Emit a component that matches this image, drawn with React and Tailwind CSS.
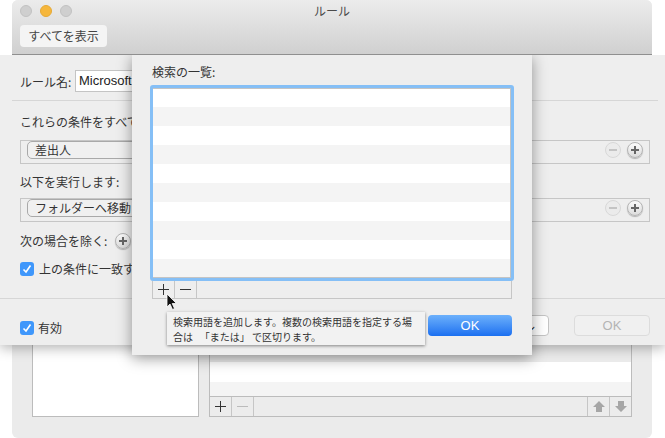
import React from 'react';

const jp = { fontFamily: '"Noto Sans CJK JP", "Liberation Sans", sans-serif' };
const latin = { fontFamily: '"Liberation Sans", sans-serif' };

const RoundButton = ({ minus, disabled }) => (
  <span className={`flex items-center justify-center w-[16px] h-[16px] rounded-full border ${disabled ? 'border-[#d8d8d8] bg-[#ebebeb]' : 'border-[#b4b4b4] bg-gradient-to-b from-[#fbfbfb] to-[#dcdcdc] shadow-[0_1px_1px_rgba(0,0,0,0.25)]'}`}>
    <svg width="10" height="10" viewBox="0 0 10 10">
      <rect x="1" y="4" width="8" height="2" fill={disabled ? '#c4c4c4' : '#666'} />
      {!minus && <rect x="4" y="1" width="2" height="8" fill="#666" />}
    </svg>
  </span>
);

const CheckBox = ({ className = '' }) => (
  <span className={`flex items-center justify-center w-[14px] h-[14px] rounded-[3px] bg-[#3f97fb] ${className}`}>
    <svg width="10" height="10" viewBox="0 0 10 10" fill="none">
      <path d="M1.5 5.5 L4 8 L8.5 1.5" stroke="#fff" strokeWidth="1.6" />
    </svg>
  </span>
);

const Pill = ({ children }) => (
  <span className="flex items-center h-[18px] w-[120px] pl-[7px] rounded-[5px] border border-[#a9a9a9] bg-[#f0f0f0] text-[12px] text-[#333] shrink-0">
    {children}
  </span>
);

const RuleBox = ({ label }) => (
  <div className="flex items-center justify-between h-[24px] ml-[20px] mr-[15px] pl-[6px] pr-[6px] pb-[4px] border border-[#c6c6c6]">
    <Pill>{label}</Pill>
    <div className="flex gap-[6px]">
      <RoundButton minus disabled />
      <RoundButton />
    </div>
  </div>
);

const Arrow = ({ down }) => (
  <svg width="14" height="13" viewBox="0 0 14 13" className={down ? 'rotate-180' : ''}>
    <path d="M7 1 L13 7 L10 7 L10 12 L4 12 L4 7 L1 7 Z" fill="#a6a6a6" />
  </svg>
);

const PlusIcon = ({ color = '#333' }) => (
  <svg width="13" height="13" viewBox="0 0 13 13">
    <rect x="1" y="6" width="11" height="1" fill={color} />
    <rect x="6" y="1" width="1" height="11" fill={color} />
  </svg>
);

const MinusIcon = ({ color = '#333' }) => (
  <svg width="13" height="13" viewBox="0 0 13 13">
    <rect x="1" y="6" width="11" height="1" fill={color} />
  </svg>
);

const Cursor = () => (
  <svg width="12" height="18" viewBox="0 0 12 18" className="absolute left-[166px] top-[293px]">
    <path d="M1 1 L1 14 L4 11 L6.5 16.5 L8.5 15.5 L6.2 10.5 L10.5 10.5 Z" fill="#111" stroke="#fff" strokeWidth="0.8" />
  </svg>
);

const App = () => {
  const rows = Array.from({ length: 10 });

  return (
    <div className="relative w-[665px] h-[438px] overflow-hidden bg-white" style={jp}>
      {/* back window */}
      <div className="absolute left-[12px] top-0 w-[640px] h-[438px] flex flex-col bg-[#ebebeb] rounded-[6px]">
        <div className="relative h-[55px] shrink-0 rounded-t-[6px] border-b border-[#8f8f8f] bg-gradient-to-b from-[#ececec] to-[#d0d0d0]">
          <div className="flex gap-[8px] pl-[8px] pt-[5px]">
            <span className="w-[12px] h-[12px] rounded-full bg-[#cfcfcf] border border-[#c2c2c2]" />
            <span className="w-[12px] h-[12px] rounded-full bg-[#f6b73c] border border-[#e6a935]" />
            <span className="w-[12px] h-[12px] rounded-full bg-[#cfcfcf] border border-[#c2c2c2]" />
          </div>
          <p className="absolute top-[3px] left-0 w-full text-center text-[12px] leading-[16px] text-[#4a4a4a]">ルール</p>
          <button className="block ml-[8px] mt-[8px] w-[87px] h-[22px] rounded-[4px] bg-[#f4f4f4] text-[12px] text-[#444]">すべてを表示</button>
        </div>
        <div className="flex-1 flex items-end gap-[10px] px-[20px] pb-[21px]">
          <div className="w-[167px] h-full bg-white border border-[#bcbcbc]" />
          <div className="flex-1 flex flex-col h-full border border-[#bcbcbc]">
            <div className="flex-1 flex flex-col justify-end">
              <div className="h-[20px] bg-white" />
              <div className="h-[14px] bg-[#f4f4f4]" />
            </div>
            <div className="flex items-center h-[20px] border-t border-[#bcbcbc] bg-[#ececec]">
              <span className="flex items-center justify-center w-[22px] h-full border-r border-[#c6c6c6]"><PlusIcon /></span>
              <span className="flex items-center justify-center w-[22px] h-full border-r border-[#c6c6c6]"><MinusIcon color="#bbb" /></span>
              <span className="flex-1" />
              <span className="flex items-center justify-center w-[22px] h-full border-l border-[#c6c6c6]"><Arrow /></span>
              <span className="flex items-center justify-center w-[22px] h-full border-l border-[#c6c6c6]"><Arrow down /></span>
            </div>
          </div>
        </div>
      </div>

      {/* rule sheet */}
      <div className="absolute left-0 top-[55px] w-[665px] h-[290px] flex flex-col bg-[#eeeeee] shadow-[0_3px_12px_rgba(0,0,0,0.3)] [clip-path:inset(0_-20px_-20px_-20px)] text-[12px] text-[#333]">
        <div className="flex items-center h-[22px] mt-[15px] ml-[20px]">
          <span className="w-[55px] pt-[2px] whitespace-nowrap">ルール名:</span>
          <span className="flex items-center h-[22px] w-[200px] pl-[3px] bg-white border border-[#c4c4c4] text-[13px] text-[#222]" style={latin}>Microsoft</span>
        </div>
        <div className="h-px mt-[8px] ml-[12px] mr-[7px] bg-[#d6d6d6]" />
        <p className="ml-[20px] mt-[13px] leading-[16px]">これらの条件をすべて満たす場合:</p>
        <div className="mt-[10px]"><RuleBox label="差出人" /></div>
        <p className="ml-[20px] mt-[10px] leading-[16px]">以下を実行します:</p>
        <div className="mt-[8px]"><RuleBox label="フォルダーへ移動" /></div>
        <div className="flex items-center gap-[8px] ml-[20px] mt-[10px] h-[18px]">
          <span>次の場合を除く:</span>
          <RoundButton />
        </div>
        <div className="flex items-center gap-[5px] ml-[20px] mt-[12px] h-[14px]">
          <CheckBox />
          <span>上の条件に一致する場合</span>
        </div>
        <div className="h-px mt-[22px] bg-[#d6d6d6]" />
        <div className="flex items-start mt-[16px] pl-[20px] pr-[15px] h-[21px]">
          <CheckBox className="mt-[6px]" />
          <span className="ml-[4px] mt-[4px] leading-[18px]">有効</span>
          <span className="flex-1" />
          <button className="flex items-center justify-end pr-[13px] w-[100px] h-[21px] rounded-[4px] bg-white border border-[#c4c4c4] text-[12px] text-[#333]">キャンセル</button>
          <button className="ml-[25px] w-[76px] h-[21px] rounded-[4px] bg-[#f0f0f0] border border-[#dcdcdc] text-[13px] text-[#b4b4b4]" style={latin}>OK</button>
        </div>
      </div>

      {/* search list sheet */}
      <div className="absolute left-[132px] top-[55px] w-[400px] h-[300px] flex flex-col bg-[#eeeeee] shadow-[0_3px_14px_rgba(0,0,0,0.4)] [clip-path:inset(0_-24px_-24px_-24px)] text-[12px] text-[#333]">
        <p className="ml-[20px] mt-[9px] leading-[16px]">検索の一覧:</p>
        <div className="ml-[18px] mt-[5px] w-[364px] h-[196px] border-[3px] border-[#85bff6] rounded-[3px] overflow-hidden">
          <div className="h-[190px] border-t border-r border-b border-[#c4c4c4] overflow-hidden">
            {rows.map((_, i) => (
              <div key={i} className={`${i === 0 ? 'h-[18px]' : 'h-[19px]'} ${i % 2 === 0 ? 'bg-white' : 'bg-[#f4f4f4]'}`} />
            ))}
          </div>
        </div>
        <div className="flex ml-[20px] w-[360px] h-[18px] border border-t-0 border-[#c6c6c6]">
          <span className="flex items-center justify-center w-[22px] border-r border-[#c6c6c6]"><PlusIcon /></span>
          <span className="flex items-center justify-center w-[22px] border-r border-[#c6c6c6]"><MinusIcon /></span>
        </div>
        <div className="flex justify-end mr-[20px] mt-[16px]">
          <button className="w-[84px] h-[21px] rounded-[4px] bg-gradient-to-b from-[#6cb0fb] to-[#1a6ff0] text-[13px] text-white" style={latin}>OK</button>
        </div>
      </div>

      {/* tooltip */}
      <div className="absolute left-[167px] top-[312px] w-[258px] h-[33px] px-[6px] py-[2px] bg-[#f2f2f2] shadow-[0_1px_3px_rgba(0,0,0,0.45)] text-[10px] leading-[15px] text-[#333]">
        検索用語を追加します。複数の検索用語を指定する場合は{'\u00a0\u00a0\u00a0'}「または」{'\u00a0'}で区切ります。
      </div>

      <Cursor />
    </div>
  );
};

export default App;
